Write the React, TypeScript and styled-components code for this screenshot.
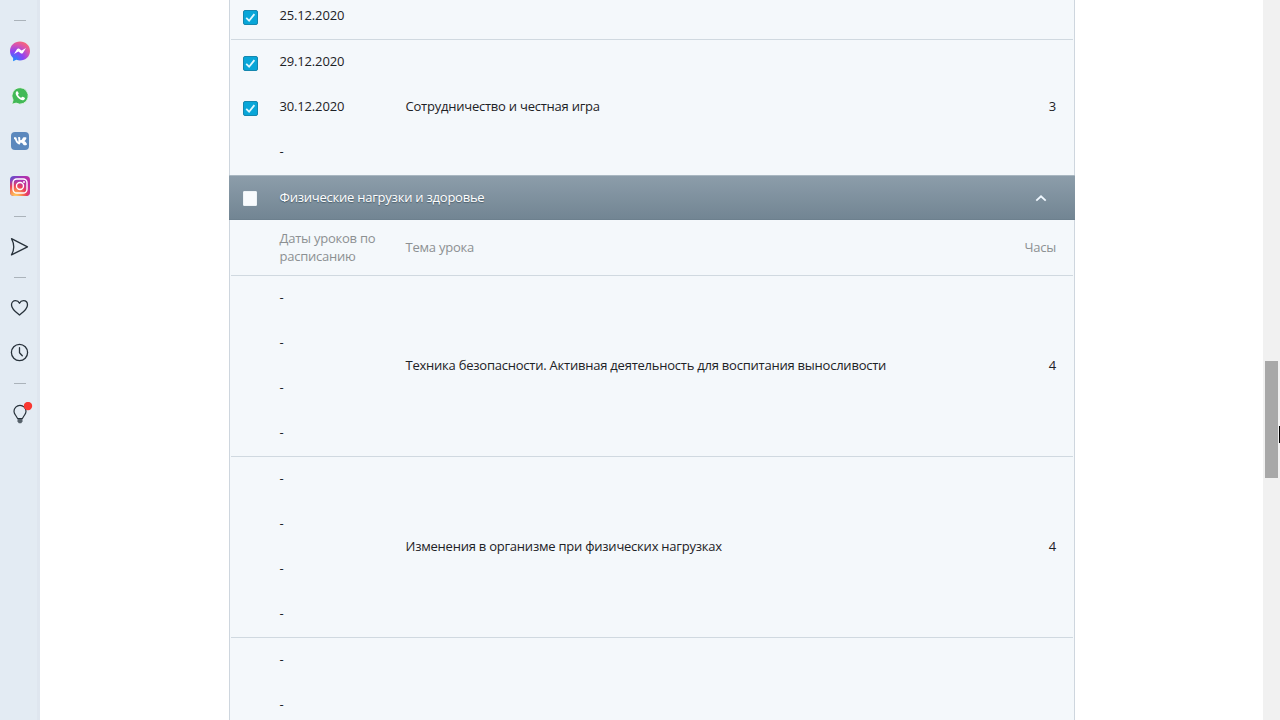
import React from "react";
import styled, { createGlobalStyle } from "styled-components";

const GlobalStyle = createGlobalStyle`
  * { box-sizing: border-box; }
  body {
    margin: 0;
    background: #fff;
    overflow: hidden;
    font: 13px/18px "Open Sans", "Noto Sans", sans-serif;
    letter-spacing: -0.23px;
    color: #1d2226;
  }
`;

const Page = styled.div`
  position: relative;
  display: flex;
  height: 720px;
  overflow: hidden;
`;

const Sidebar = styled.nav`
  flex: none;
  width: 40px;
  padding-top: 12px;
  background: linear-gradient(90deg, #e3ebf3 0 37px, #dfe6ef 37px 40px);
`;

const SideItem = styled.div`
  display: flex;
  align-items: center;
  justify-content: center;
  height: 45px;
  padding-top: 1px;
  svg { display: block; }
`;

const SideDivider = styled.div`
  display: flex;
  align-items: center;
  height: 16px;
  padding: 1px 0 0 14px;
  &::before {
    content: "";
    width: 12px;
    height: 1px;
    background: #abb3ba;
  }
`;

const Content = styled.main`
  flex: 1;
  padding-left: 189px;
`;

const Table = styled.section`
  width: 846px;
  height: 720px;
  overflow: hidden;
  display: flex;
  flex-direction: column;
  background: #f4f8fb;
`;

const Panel = styled.div<{ $fill?: boolean }>`
  flex: ${(p) => (p.$fill ? "1" : "none")};
  display: flex;
  flex-direction: column;
  padding: 0 1px;
  border: solid #ced6de;
  border-width: 0 1px;
`;

const Group = styled.div<{ $last?: boolean; $lead?: number }>`
  flex: none;
  display: grid;
  grid-template-columns: 174.5px 1fr 60px;
  align-items: center;
  margin-top: ${(p) => p.$lead ?? 0}px;
  border-bottom: ${(p) => (p.$last ? "none" : "1px solid #d0d9e0")};
`;

const DateRow = styled.div`
  display: flex;
  align-items: center;
  height: 45px;
  padding-left: 12px;
`;

const CheckCell = styled.div`
  width: 36.5px;
  padding-top: 2px;
`;

const DateText = styled.span`
  padding-bottom: 3px;
  letter-spacing: -0.16px;
`;

const CheckBox = styled.span<{ $on?: boolean }>`
  display: flex;
  align-items: center;
  justify-content: center;
  width: ${(p) => (p.$on ? 15 : 14)}px;
  height: 15px;
  border-radius: ${(p) => (p.$on ? 2 : 1)}px;
  background: ${(p) => (p.$on ? "#08a6d8" : "#f9fbfd")};
  border: ${(p) => (p.$on ? "1px solid #1587ae" : "1px solid #eef3f6")};
`;

const Topic = styled.div`
  padding-bottom: 3px;
`;

const Hours = styled.div`
  padding: 0 17px 3px 0;
  text-align: right;
`;

const SectionBar = styled.div`
  flex: none;
  display: flex;
  align-items: center;
  height: 45px;
  padding: 0 28.5px 0 14px;
  color: #fff;
  background: linear-gradient(#8c9daa, #728593);
  border-top: 1px solid #a9b7c1;
  border-bottom: 1px solid #6d808e;
  text-shadow: 0 1px 1px #4b5e6b;
`;

const SectionTitle = styled.h2`
  flex: 1;
  margin: 0;
  padding: 0 0 2px;
  font-size: 13px;
  font-weight: 400;
`;

const HeadRow = styled.div`
  flex: none;
  display: grid;
  grid-template-columns: 174.5px 1fr 60px;
  align-items: center;
  height: 56px;
  border-bottom: 1px solid #d0d9e0;
  color: #8c9092;
  ${Topic}, ${Hours} { padding-bottom: 1px; }
`;

const HeadDate = styled.div`
  width: 160px;
  padding: 0 0 2px 48.5px;
`;

const ScrollTrack = styled.div`
  flex: none;
  width: 17px;
  padding: 361px 2px 0;
  background: #f1f1f1;
`;

const ScrollThumb = styled.div`
  width: 13px;
  height: 117px;
  background: #a8a8a8;
`;

const Pointer = styled.div`
  position: absolute;
  right: 0;
  top: 426px;
  width: 1px;
  height: 17px;
  background: #000;
`;

const Tick = () => (
  <svg width="11" height="11" viewBox="0 0 11 11" fill="none" stroke="#dff8ff" strokeWidth="1.8">
    <path d="M1.2 5.9 4.1 8.7 9.4 2.1" />
  </svg>
);

const Messenger = () => (
  <svg width="20" height="21" viewBox="0 0 20 21">
    <defs>
      <radialGradient id="msg" cx=".2" cy="1" r="1.1">
        <stop offset="0" stopColor="#1292ff" />
        <stop offset=".45" stopColor="#8a43f5" />
        <stop offset=".75" stopColor="#d453b4" />
        <stop offset="1" stopColor="#fb6774" />
      </radialGradient>
    </defs>
    <path fill="url(#msg)" d="M10 .5C4.400.500 0 4.500 0 10c0 2.900 1.200 5.300 3.100 7v3.300l3.200-1.500c1.200.4 2.400.6 3.700.6 5.600 0 10-4 10-9.500S15.600.5 10 .5Z" />
    <path fill="#fff" d="m4 12.900 3.100-4.800c.5-.8 1.500-.9 2.200-.4l2.300 1.700 4.400-2.300-3.100 4.800c-.5.700-1.500.900-2.200.4l-2.300-1.700Z" />
  </svg>
);

const WhatsApp = () => (
  <svg width="18" height="18" viewBox="0 0 18 18">
    <path fill="#42b956" stroke="#f1f8f4" strokeWidth=".8" d="M9.200.7a8.200 8.200 0 0 0-7.100 12.400L.8 17.300l4.300-1.200A8.200 8.200 0 1 0 9.200.7Z" />
    <path fill="#fff" d="M6.700 4.500c-.3-.5-.9-.4-1.300 0-1.100 1.200-.9 2.700.1 4.200 1.500 2.500 3.700 4.200 6 4.600 1 .1 2.100-.6 2.400-1.500.1-.4.100-.8-.2-1l-1.900-1c-.4-.2-.7 0-1 .5-.3.400-.6.600-1 .4-1.200-.6-2.200-1.500-2.800-2.600-.2-.4.500-.8.700-1.300.1-.2 0-.500-.1-.700Z" />
  </svg>
);

const Vk = () => (
  <svg width="18" height="18" viewBox="0 0 18 18">
    <rect width="18" height="18" rx="4" fill="#5b88bd" />
    <path fill="none" stroke="#fff" strokeWidth="1.9" strokeLinejoin="round" d="M3 6.200h1.600c.4 2.500 1.800 4.700 3.700 5.300V6H7.200M9.200 9.300c2.400 0 3.100-1.600 3.600-3.200h1.700c-.4 1.600-1.500 2.600-2.400 3.100 1.100.5 2.300 1.600 2.900 3h-1.900c-.6-1.600-1.800-2.500-3.900-2.600" />
  </svg>
);

const Instagram = () => (
  <svg width="20" height="20" viewBox="0 0 20 20">
    <defs>
      <linearGradient id="ig-base" x1="0" y1="0" x2="1" y2=".35">
        <stop offset="0" stopColor="#5e50cc" />
        <stop offset=".5" stopColor="#a036b8" />
        <stop offset="1" stopColor="#c42c9d" />
      </linearGradient>
      <radialGradient id="ig-warm" cx=".27" cy="1.05" r=".95">
        <stop offset="0" stopColor="#ffd967" />
        <stop offset=".3" stopColor="#fb9750" />
        <stop offset=".6" stopColor="#ea3f59" />
        <stop offset="1" stopColor="#c837ab" stopOpacity="0" />
      </radialGradient>
    </defs>
    <rect width="20" height="20" rx="4" fill="url(#ig-base)" />
    <rect width="20" height="20" rx="4" fill="url(#ig-warm)" />
    <g fill="none" stroke="#fff" strokeWidth="1.400">
      <rect x="3" y="3" width="14" height="14" rx="3.800" />
      <circle cx="10" cy="10" r="3.500" />
    </g>
    <circle cx="14" cy="6" r="1" fill="#fff" />
  </svg>
);

const lineIcon = {
  fill: "none",
  stroke: "#27313a",
  strokeWidth: 1.3,
  strokeLinejoin: "round" as const,
  strokeLinecap: "round" as const,
};

const Send = () => (
  <svg width="20" height="20" viewBox="0 0 20 20" {...lineIcon}>
    <path d="M1.500 1.700 17.500 9.800 1.500 17.900Q6 9.800 1.500 1.700Z" />
  </svg>
);

const Heart = () => (
  <svg width="20" height="20" viewBox="0 0 20 20" {...lineIcon}>
    <path d="M9.500 17C6 14.200 1.500 11 1.500 6.900c0-2.500 1.700-4.200 4-4.200 1.700 0 3.200.9 4 2.500.8-1.600 2.300-2.500 4-2.500 2.300 0 4 1.700 4 4.200 0 4.100-4.500 7.300-8 10.100Z" />
  </svg>
);

const Clock = () => (
  <svg width="20" height="20" viewBox="0 0 20 20" {...lineIcon}>
    <circle cx="9.500" cy="9.500" r="8.100" />
    <path d="M9.500 4.700v5l2.800 3" />
  </svg>
);

const Bulb = () => (
  <svg width="26" height="24" viewBox="0 0 26 24" {...lineIcon} strokeWidth={1.2}>
    <path d="M10.600 16.500 8.300 12.800C7.300 11.500 7 10.300 7 9.300a6 6 0 0 1 12 0c0 1-.3 2.200-1.300 3.500L15.400 16.500Z" />
    <path fill="#56616a" stroke="none" d="M10.500 17h5v2.500l-1.300 1.800h-2.400l-1.300-1.800Z" />
    <circle cx="21" cy="4" r="4.200" fill="#f93832" stroke="none" />
  </svg>
);

const Chevron = () => (
  <svg width="12" height="8" viewBox="0 0 12 8" fill="none" stroke="#f0f8ff" strokeWidth="1.8">
    <path d="M1.300 6.700 6 2.300l4.700 4.400" />
  </svg>
);

type Lesson = { date: string; checked?: boolean };
type GroupProps = { lessons: Lesson[]; topic?: string; hours?: number; last?: boolean; lead?: number };

const LessonGroup = ({ lessons, topic, hours, last, lead }: GroupProps) => (
  <Group $last={last} $lead={lead}>
    <div>
      {lessons.map((lesson, i) => (
        <DateRow key={i}>
          <CheckCell>{lesson.checked && <CheckBox $on><Tick /></CheckBox>}</CheckCell>
          <DateText>{lesson.date}</DateText>
        </DateRow>
      ))}
    </div>
    <Topic>{topic}</Topic>
    <Hours>{hours}</Hours>
  </Group>
);

const unscheduled = (count: number): Lesson[] => Array.from({ length: count }, () => ({ date: "-" }));

export default function App() {
  return (
    <Page>
      <GlobalStyle />
      <Sidebar>
        <SideDivider />
        <SideItem><Messenger /></SideItem>
        <SideItem><WhatsApp /></SideItem>
        <SideItem><Vk /></SideItem>
        <SideItem><Instagram /></SideItem>
        <SideDivider />
        <SideItem><Send /></SideItem>
        <SideDivider />
        <SideItem><Heart /></SideItem>
        <SideItem><Clock /></SideItem>
        <SideDivider />
        <SideItem><Bulb /></SideItem>
      </Sidebar>
      <Content>
        <Table>
          <Panel>
            <LessonGroup lead={-6} lessons={[{ date: "25.12.2020", checked: true }]} />
            <LessonGroup
              last
              lessons={[
                { date: "29.12.2020", checked: true },
                { date: "30.12.2020", checked: true },
                { date: "-" },
              ]}
              topic="Сотрудничество и честная игра"
              hours={3}
            />
          </Panel>
          <SectionBar>
            <CheckCell><CheckBox /></CheckCell>
            <SectionTitle>Физические нагрузки и здоровье</SectionTitle>
            <Chevron />
          </SectionBar>
          <Panel $fill>
            <HeadRow>
              <HeadDate>Даты уроков по расписанию</HeadDate>
              <Topic>Тема урока</Topic>
              <Hours>Часы</Hours>
            </HeadRow>
            <LessonGroup
              lessons={unscheduled(4)}
              topic="Техника безопасности. Активная деятельность для воспитания выносливости"
              hours={4}
            />
            <LessonGroup lessons={unscheduled(4)} topic="Изменения в организме при физических нагрузках" hours={4} />
            <LessonGroup last lessons={unscheduled(2)} />
          </Panel>
        </Table>
      </Content>
      <ScrollTrack>
        <ScrollThumb />
      </ScrollTrack>
      <Pointer />
    </Page>
  );
}
